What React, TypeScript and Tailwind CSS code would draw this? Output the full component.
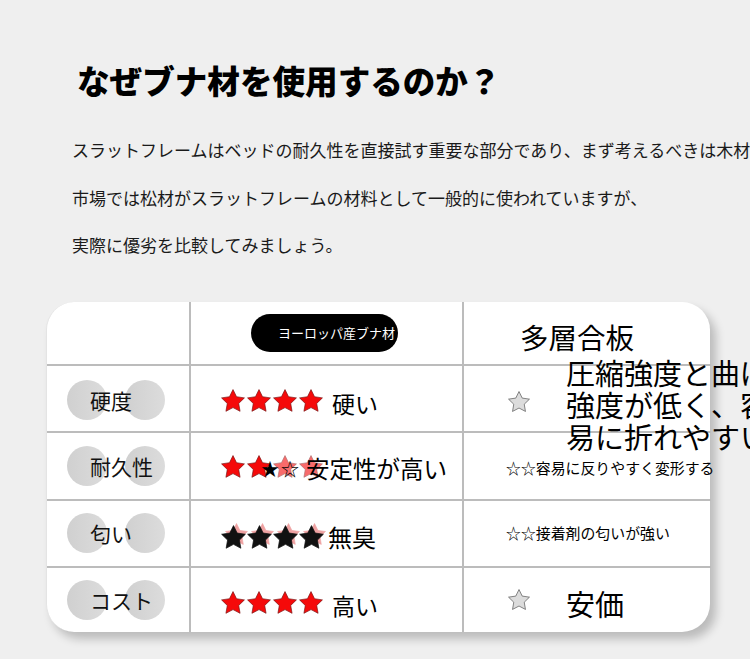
const STAR = "12,2 15.09,8.26 22,9.27 17,14.14 18.18,21.02 12,17.77 5.82,21.02 7,14.14 2,9.27 8.91,8.26";

function Star({ fill = "#f50a0a", stroke = "#7a1414", size = 23, className = "" }: { fill?: string; stroke?: string; size?: number; className?: string }) {
  return (
    <svg width={size} height={size} viewBox="1.5 1.5 21 21" className={className}>
      <polygon points={STAR} fill={fill} stroke={stroke} strokeWidth="0.6" strokeLinejoin="round" />
    </svg>
  );
}

function RedStars({ faded = 0 }: { faded?: number }) {
  return (
    <div className="flex gap-[2px]">
      {[0, 1, 2, 3].map((i) => (
        <Star key={i} size={24} className={i >= 4 - faded ? "opacity-60" : ""} />
      ))}
    </div>
  );
}

function Label({ text }: { text: string }) {
  return (
    <div className="relative flex w-[98px] h-[40px] justify-between">
      <div className="w-[40px] h-[40px] rounded-full bg-gradient-to-r from-[#d0d0d0] to-[#dcdcdc]" />
      <div className="w-[40px] h-[40px] rounded-full bg-gradient-to-r from-[#d0d0d0] to-[#dcdcdc]" />
      <span className="absolute left-[23px] top-[6px] text-[21px] leading-[28px] text-[#111]">{text}</span>
    </div>
  );
}

function OutlineStar() {
  return <Star fill="#dcdcdc" stroke="#444" size={22} />;
}

export default function App() {
  return (
    <div
      className="w-[750px] h-[659px] overflow-hidden bg-[#efefef] text-black"
      style={{ fontFamily: '"Noto Sans CJK JP", "Noto Sans", sans-serif' }}
    >
      <h1 className="pt-[60px] pl-[77px] text-[32.6px] leading-[40px] font-black whitespace-nowrap">なぜブナ材を使用するのか？</h1>

      <div className="mt-[26px] pl-[72px] text-[17px] leading-[47.5px] text-[#1a1a1a] whitespace-nowrap">
        <p>スラットフレームはベッドの耐久性を直接試す重要な部分であり、まず考えるべきは木材</p>
        <p>市場では松材がスラットフレームの材料として一般的に使われていますが、</p>
        <p>実際に優劣を比較してみましょう。</p>
      </div>

      <div className="ml-[46px] mt-[33px] w-[664px] h-[330px] bg-white rounded-[28px] border-l border-[#e4e4e4] shadow-[6px_7px_10px_rgba(0,0,0,0.22)] grid grid-cols-[144px_273px_247px] grid-rows-[64px_67px_68px_67px_64px]">
        {/* header */}
        <div className="border-r-2 border-b-2 border-[#bcbcbc]" />
        <div className="border-r-2 border-b-2 border-[#bcbcbc] flex items-center pl-[60px]">
          <div className="w-[147px] h-[38px] rounded-full bg-black overflow-hidden flex items-center pl-[27px]">
            <span className="text-white text-[13px] whitespace-nowrap">ヨーロッパ産ブナ材</span>
          </div>
        </div>
        <div className="border-b-2 border-[#bcbcbc] flex items-center pl-[56px]">
          <span className="text-[28.5px] leading-[36px] pt-[8px]">多層合板</span>
        </div>

        {/* hardness */}
        <div className="border-r-2 border-b-2 border-[#bcbcbc] flex items-center pl-[20px] pt-[4px]">
          <Label text="硬度" />
        </div>
        <div className="border-r-2 border-b-2 border-[#bcbcbc] flex items-center pl-[30px] pt-[6px]">
          <RedStars />
          <span className="ml-[9px] text-[23px] leading-[30px] pt-[4px]">硬い</span>
        </div>
        <div className="relative border-b-2 border-[#bcbcbc] flex items-center pl-[44px] pt-[8px]">
          <OutlineStar />
          <p className="absolute left-[102px] top-[-10px] w-[210px] text-[29px] leading-[32px]">圧縮強度と曲げ強度が低く、容易に折れやすい</p>
        </div>

        {/* durability */}
        <div className="border-r-2 border-b-2 border-[#bcbcbc] flex items-center pl-[20px]">
          <Label text="耐久性" />
        </div>
        <div className="relative border-r-2 border-b-2 border-[#bcbcbc] flex items-center pl-[30px] pt-[2px]">
          <RedStars faded={2} />
          <div className="absolute left-[70px] top-[20px] flex items-center">
            <span className="text-[18px] leading-[30px] tracking-[2px]">★☆</span>
            <span className="text-[23.5px] leading-[30px] ml-[5px]">安定性が高い</span>
          </div>
        </div>
        <div className="border-b-2 border-[#bcbcbc] flex items-center pl-[42px] pt-[4px]">
          <span className="text-[14.9px] leading-[24px] whitespace-nowrap">☆☆容易に反りやすく変形する</span>
        </div>

        {/* smell */}
        <div className="border-r-2 border-b-2 border-[#bcbcbc] flex items-center pl-[20px]">
          <Label text="匂い" />
        </div>
        <div className="relative border-r-2 border-b-2 border-[#bcbcbc] flex items-center pl-[30px] pt-[8px]">
          <div className="absolute left-[34px] top-[22px] flex gap-[3px] opacity-50">
            {[0, 1, 2, 3].map((i) => (
              <Star key={i} fill="#e04848" stroke="#e04848" size={23} />
            ))}
          </div>
          <div className="relative flex gap-[1px]">
            {[0, 1, 2, 3].map((i) => (
              <Star key={i} fill="#111" stroke="#111" size={25} />
            ))}
          </div>
          <span className="relative ml-[4px] text-[24px] leading-[30px]">無臭</span>
        </div>
        <div className="border-b-2 border-[#bcbcbc] flex items-center pl-[42px]">
          <span className="text-[14.9px] leading-[24px] whitespace-nowrap">☆☆接着剤の匂いが強い</span>
        </div>

        {/* cost */}
        <div className="flex items-center pl-[20px] border-r-2 border-[#bcbcbc]">
          <Label text="コスト" />
        </div>
        <div className="border-r-2 border-[#bcbcbc] flex items-center pl-[30px] pt-[6px]">
          <RedStars />
          <span className="ml-[9px] text-[23px] leading-[30px] pt-[4px]">高い</span>
        </div>
        <div className="flex items-center pl-[44px]">
          <OutlineStar />
          <span className="ml-[36px] text-[29px] leading-[36px] pt-[6px]">安価</span>
        </div>
      </div>
    </div>
  );
}
